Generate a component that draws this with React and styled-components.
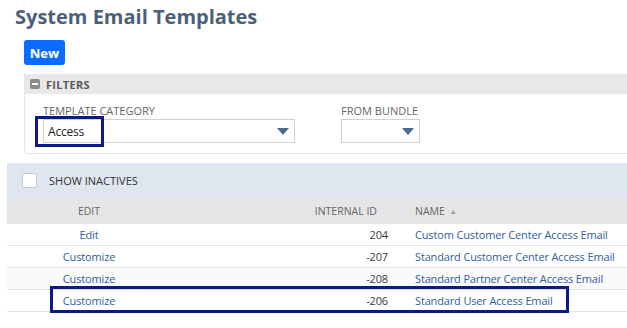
import React from "react";
import styled, { createGlobalStyle } from "styled-components";

const Global = createGlobalStyle`
  body {
    margin: 0;
    background: #ffffff;
    font-family: "Open Sans", "Liberation Sans", sans-serif;
  }
`;

const Page = styled.div`
  width: 627px;
  height: 328px;
  overflow: hidden;
  background: #fff;
`;

const Title = styled.h1`
  margin: 0;
  padding: 3px 0 0 15px;
  font-size: 20px;
  line-height: 28px;
  font-weight: 700;
  color: #4d5f79;
`;

const Toolbar = styled.div`
  padding: 9px 0 0 24px;
  height: 25px;
`;

const PrimaryButton = styled.button`
  display: block;
  height: 25px;
  width: 41px;
  padding: 0;
  border: none;
  border-radius: 3px;
  background: #0a6cff;
  color: #fff;
  font-family: inherit;
  font-weight: 700;
  font-size: 13px;
`;

const FilterPanel = styled.div`
  margin: 9px 0 0 24px;
  border-left: 1px solid #e6e6e6;
  border-bottom: 1px solid #e6e6e6;
  border-bottom-left-radius: 4px;
`;

const FilterHeader = styled.div`
  display: flex;
  align-items: center;
  gap: 6px;
  height: 20px;
  padding-left: 5px;
  background: #e8e8e8;
  font-size: 11px;
  font-weight: 700;
  letter-spacing: 0.3px;
  color: #5a5a5a;
`;

const MinusIcon = styled.span`
  width: 10px;
  height: 10px;
  border-radius: 2px;
  background: #8a8a8a;
  display: flex;
  align-items: center;
  justify-content: center;
  &::after {
    content: "";
    width: 6px;
    height: 2px;
    background: #fff;
  }
`;

const FilterBody = styled.div`
  display: flex;
  gap: 46px;
  padding: 10px 0 10px 18px;
`;

const Field = styled.div`
  display: flex;
  flex-direction: column;
`;

const Label = styled.label`
  font-size: 11px;
  line-height: 13px;
  color: #666;
  margin-bottom: 2px;
`;

const Select = styled.div`
  position: relative;
  box-sizing: border-box;
  width: ${(p) => p.width}px;
  height: 24px;
  border: 1px solid #d0d0d0;
  display: flex;
  align-items: center;
  padding-left: 4px;
  font-size: 12px;
  letter-spacing: -0.2px;
  color: #222;
`;

const Caret = styled.span`
  position: absolute;
  right: 5px;
  top: 8px;
  width: 0;
  height: 0;
  border-left: 6px solid transparent;
  border-right: 6px solid transparent;
  border-top: 7px solid #4a6a8e;
`;

const Highlight = styled.span`
  position: absolute;
  box-sizing: border-box;
  border: 3px solid #0b1a86;
  pointer-events: none;
  left: ${(p) => p.left}px;
  top: ${(p) => p.top}px;
  width: ${(p) => p.w}px;
  height: ${(p) => p.h}px;
`;

const ListArea = styled.div`
  margin: 9px 0 0 7px;
`;

const InactiveBar = styled.div`
  display: flex;
  align-items: center;
  gap: 12px;
  height: 35px;
  padding-left: 15px;
  background: #dfe6ef;
  font-size: 11px;
  color: #333;
`;

const Checkbox = styled.span`
  box-sizing: border-box;
  width: 15px;
  height: 15px;
  background: #fff;
  border: 1px solid #c8c8c8;
  border-radius: 2px;
`;

const Row = styled.div`
  position: relative;
  display: grid;
  grid-template-columns: 164px 224px 1fr;
  align-items: center;
  height: ${(p) => (p.head ? 26 : 21)}px;
  background: ${(p) => (p.head ? "#e5e5e5" : p.shade ? "#fafafa" : "#fff")};
  border-bottom: ${(p) => (p.head ? "none" : "1px solid #e3e3e3")};
  font-size: ${(p) => (p.head ? 10.5 : 11)}px;
  letter-spacing: ${(p) => (p.head ? 0 : -0.15)}px;
  color: ${(p) => (p.head ? "#666" : "#3a3a3a")};
`;

const EditCell = styled.div`
  text-align: center;
`;

const IdCell = styled.div`
  text-align: right;
  padding-right: ${(p) => (p.head ? 18 : 7)}px;
`;

const NameCell = styled.div`
  padding-left: 20px;
  white-space: nowrap;
`;

const SortMark = styled.span`
  margin-left: 5px;
  font-size: 7px;
  color: #999;
  vertical-align: 1px;
`;

const Link = styled.a`
  color: #2f5e9e;
  text-decoration: none;
`;

const rows = [
  { action: "Edit", id: "204", name: "Custom Customer Center Access Email" },
  { action: "Customize", id: "-207", name: "Standard Customer Center Access Email" },
  { action: "Customize", id: "-208", name: "Standard Partner Center Access Email", shade: true },
  { action: "Customize", id: "-206", name: "Standard User Access Email", mark: true },
];

export default function App() {
  return (
    <Page>
      <Global />
      <Title>System Email Templates</Title>
      <Toolbar>
        <PrimaryButton>New</PrimaryButton>
      </Toolbar>
      <FilterPanel>
        <FilterHeader>
          <MinusIcon />
          FILTERS
        </FilterHeader>
        <FilterBody>
          <Field>
            <Label>TEMPLATE CATEGORY</Label>
            <Select width={252}>
              Access
              <Caret />
              <Highlight left={-9} top={-4} w={69} h={31} />
            </Select>
          </Field>
          <Field>
            <Label>FROM BUNDLE</Label>
            <Select width={79}>
              <Caret />
            </Select>
          </Field>
        </FilterBody>
      </FilterPanel>
      <ListArea>
        <InactiveBar>
          <Checkbox />
          SHOW INACTIVES
        </InactiveBar>
        <Row head>
          <EditCell>EDIT</EditCell>
          <IdCell head>INTERNAL ID</IdCell>
          <NameCell>
            NAME<SortMark>&#9650;</SortMark>
          </NameCell>
        </Row>
        {rows.map((r) => (
          <Row key={r.id} shade={r.shade}>
            <EditCell>
              <Link>{r.action}</Link>
            </EditCell>
            <IdCell>{r.id}</IdCell>
            <NameCell>
              <Link>{r.name}</Link>
            </NameCell>
            {r.mark && <Highlight left={43} top={-4} w={519} h={27} />}
          </Row>
        ))}
      </ListArea>
    </Page>
  );
}
